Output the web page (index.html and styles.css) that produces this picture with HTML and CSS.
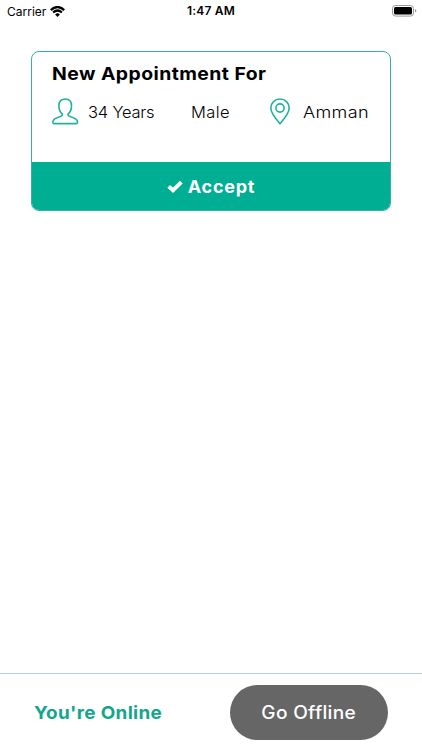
FILE: index.html
```html
<!DOCTYPE html>
<html lang="en">
<head>
<meta charset="utf-8">
<title>Appointments</title>
<link rel="stylesheet" href="styles.css">
</head>
<body>
<div class="screen">
  <header class="status">
    <div class="carrier"><span>Carrier</span>
      <svg class="wifi" viewBox="0 0 15 11" width="15" height="11"><g fill="none" stroke="#000" stroke-width="2.3"><path d="M.8 4.1Q7.5-2 14.2 4.1"/><path d="M3.1 6.5Q7.5 2.6 11.9 6.5"/></g><path d="M5.1 8.4Q7.5 6.3 9.9 8.4L7.5 10.9Z"/></svg>
    </div>
    <time class="time">1:47 AM</time>
    <svg class="battery" viewBox="0 0 25 12" width="25" height="12"><rect x=".5" y=".5" width="21" height="10.6" rx="3" fill="#fff" stroke="#999"/><rect x="2" y="2" width="18" height="7.6" rx="1.6"/><path d="M23 4q1.4.5 1.4 1.8T23 7.6Z" fill="#999"/></svg>
  </header>
  <main class="content">
    <article class="card">
      <div class="card-body">
        <h1 class="title">New Appointment For</h1>
        <div class="details">
          <svg class="person" viewBox="0 0 27 27" width="27" height="27"><path d="M13.500 1C9.200 1 6.900 3.600 6.900 7.800c0 3.600.9 6.400 3.500 8.400.3 1.200-.4 1.800-2.700 2.500C2.900 20 .9 21.300.8 24.300c0 .9.400 1.300 1.200 1.300h22.400c.8 0 1.200-.4 1.200-1.300-.1-3-2.100-4.300-6.900-5.600-2.300-.7-3-1.300-2.700-2.500 2.600-2 3.500-4.800 3.500-8.400C19.500 3.600 17.400 1 13.500 1Z"/></svg>
          <span class="age">34 Years</span>
          <span class="gender">Male</span>
          <svg class="pin" viewBox="0 0 20 27" width="20" height="27"><path d="M10 1C4.900 1 .8 5 .8 10c0 5 4.700 10.600 9.200 15.700C14.500 20.600 19.200 15 19.200 10 19.200 5 15.100 1 10 1Z"/><circle cx="10" cy="10" r="4.100"/></svg>
          <span class="city">Amman</span>
        </div>
      </div>
      <button class="accept">
        <svg viewBox="0 0 16 13" width="16" height="13"><path d="M1.700 6.400 6 10.300 14.300 2.200" fill="none" stroke="#fff" stroke-width="3.900"/></svg>
        <span class="accept-label">Accept</span>
      </button>
    </article>
  </main>
  <footer class="footer">
    <span class="online">You're Online</span>
    <button class="offline"><span class="offline-label">Go Offline</span></button>
  </footer>
</div>
</body>
</html>
```
FILE: styles.css
```css
* { box-sizing: border-box; }
body {
  margin: 0;
  background: #fff;
  color: #000;
  font-family: Inter, "Open Sans", sans-serif;
}
button { border: 0; padding: 0; font: inherit; color: #fff; }
svg { display: block; flex: none; }
.screen { display: flex; flex-direction: column; height: 750px; overflow: hidden; }
.status {
  display: grid;
  grid-template-columns: 1fr auto 1fr;
  align-items: center;
  height: 22px;
  padding: 0 5px 0 7px;
}
.carrier { display: flex; align-items: center; gap: 4px; font-size: 12px; }
.time { font-size: 12px; font-weight: 600; letter-spacing: .2px; transform: translate(-1px, -1px); }
.battery { justify-self: end; }
.content { flex: 1; padding: 29px 31px 0; }
.card {
  display: flex;
  flex-direction: column;
  height: 160px;
  border: 1px solid #35b39c;
  border-radius: 8px;
  overflow: hidden;
}
.card-body { flex: 1; padding: 10px 20px 0; }
.title {
  margin: 0;
  font-size: 18px;
  line-height: 24px;
  font-weight: 700;
  letter-spacing: .42px;
  white-space: nowrap;
  transform: scaleX(1.076);
  transform-origin: left;
}
.details { display: flex; align-items: center; height: 27px; margin-top: 12px; font-size: 16.5px; font-weight: 350; white-space: nowrap; }
.person, .pin { fill: none; stroke: #20b39b; stroke-width: 1.6; }
.age { margin-left: 9px; width: 103px; letter-spacing: -.2px; }
.gender { width: 79px; letter-spacing: .4px; }
.city { margin-left: 13px; letter-spacing: .3px; transform: scaleX(1.095); transform-origin: left; }
.accept {
  display: flex;
  align-items: center;
  justify-content: center;
  gap: 5px;
  height: 48px;
  background: #00ae94;
  font-size: 18px;
  font-weight: 700;
}
.accept-label { letter-spacing: .75px; }
.footer {
  display: flex;
  align-items: center;
  justify-content: space-between;
  height: 77px;
  padding: 0 34px;
  border-top: 1px solid #b9d0d3;
}
.online {
  color: #14a58d;
  font-size: 18px;
  font-weight: 700;
  letter-spacing: .3px;
  transform: scaleX(1.05);
  transform-origin: left;
}
.offline {
  width: 158px;
  height: 55px;
  border-radius: 28px;
  background: #666;
  font-size: 18px;
  font-weight: 500;
  letter-spacing: .3px;
}
.offline-label { display: inline-block; transform: scaleX(1.06); }
```
